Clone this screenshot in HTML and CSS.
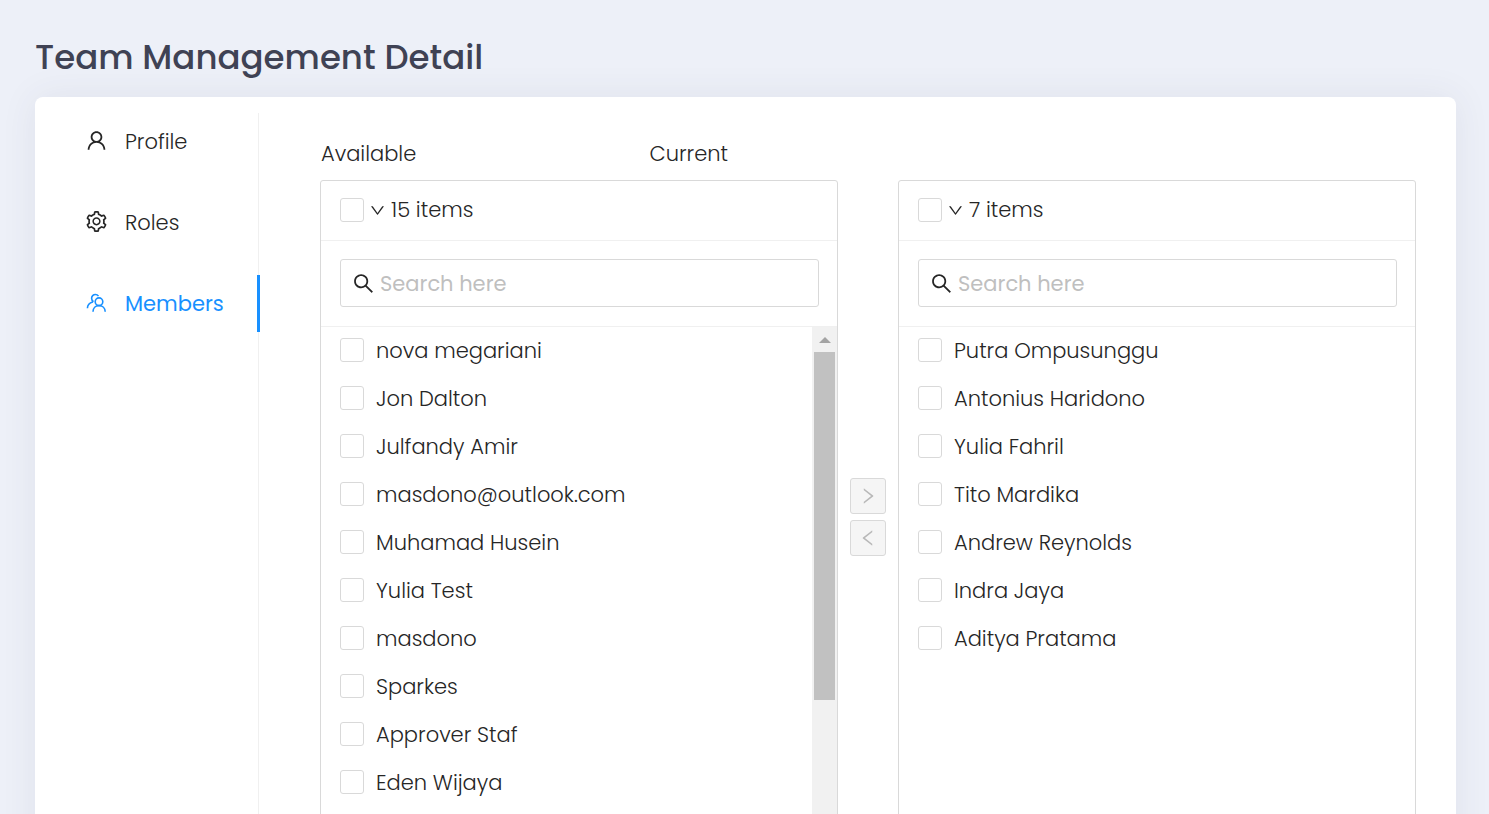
FILE: index.html
```
<!DOCTYPE html>
<html lang="en">
<head>
<meta charset="utf-8">
<meta name="viewport" content="width=device-width, initial-scale=1">
<title>Team Management Detail</title>
<link rel="stylesheet" href="styles.css">
</head>
<body>
<svg class="sprite" aria-hidden="true">
  <symbol id="user" viewBox="64 64 896 896"><path d="M858.5 763.6a374 374 0 00-80.6-119.5 375.63 375.63 0 00-119.5-80.6c-.4-.2-.8-.3-1.2-.5C719.5 518 760 444.7 760 362c0-137-111-248-248-248S264 225 264 362c0 82.7 40.5 156 102.8 201.1-.4.2-.8.3-1.2.5-44.8 18.9-85 46-119.5 80.6a375.63 375.63 0 00-80.6 119.5A371.7 371.7 0 00136 901.8a8 8 0 008 8.2h60c4.4 0 7.9-3.5 8-7.8 2-77.2 33-149.5 87.8-204.3 56.7-56.7 132-87.9 212.2-87.9s155.5 31.2 212.2 87.9C779 752.7 810 825 812 902.2c.1 4.4 3.6 7.8 8 7.8h60a8 8 0 008-8.2c-1-47.8-10.9-94.3-29.5-138.2zM512 534c-45.9 0-89.1-17.9-121.6-50.4S340 407.9 340 362c0-45.9 17.9-89.1 50.4-121.6S466.1 190 512 190s89.1 17.9 121.6 50.4S684 316.1 684 362c0 45.9-17.9 89.1-50.4 121.6S557.9 534 512 534z"/></symbol>
  <symbol id="setting" viewBox="64 64 896 896"><path d="M924.8 625.7l-65.5-56c3.1-19 4.7-38.4 4.7-57.8s-1.6-38.8-4.7-57.8l65.5-56a32.03 32.03 0 009.3-35.2l-.9-2.6a443.74 443.74 0 00-79.7-137.9l-1.8-2.1a32.12 32.12 0 00-35.1-9.5l-81.3 28.9c-30-24.6-63.5-44-99.7-57.6l-15.7-85a32.05 32.05 0 00-25.8-25.7l-2.7-.5c-52.1-9.4-106.9-9.4-159 0l-2.7.5a32.05 32.05 0 00-25.8 25.7l-15.8 85.4a351.86 351.86 0 00-99 57.4l-81.9-29.1a32 32 0 00-35.1 9.5l-1.8 2.1a446.02 446.02 0 00-79.7 137.9l-.9 2.6c-4.5 12.5-.8 26.5 9.3 35.2l66.3 56.6c-3.1 18.8-4.6 38-4.6 57.1 0 19.2 1.5 38.4 4.6 57.1L99 625.5a32.03 32.03 0 00-9.3 35.2l.9 2.6c18.1 50.4 44.9 96.9 79.7 137.9l1.8 2.1a32.12 32.12 0 0035.1 9.5l81.9-29.1c29.8 24.5 63.1 43.9 99 57.4l15.8 85.4a32.05 32.05 0 0025.8 25.7l2.7.5a449.4 449.4 0 00159 0l2.7-.5a32.05 32.05 0 0025.8-25.7l15.7-85a350 350 0 0099.7-57.6l81.3 28.9a32 32 0 0035.1-9.5l1.8-2.1c34.8-41.1 61.6-87.5 79.7-137.9l.9-2.6c4.5-12.3.8-26.3-9.3-35zM788.3 465.9c2.5 15.1 3.8 30.6 3.8 46.1s-1.3 31-3.8 46.1l-6.6 40.1 74.7 63.9a370.03 370.03 0 01-42.6 73.6L721 702.8l-31.4 25.8c-23.9 19.6-50.5 35-79.3 45.8l-38.1 14.3-17.9 97a377.5 377.5 0 01-85 0l-17.9-97.2-37.8-14.5c-28.5-10.8-55-26.2-78.7-45.7l-31.4-25.9-93.4 33.2c-17-22.9-31.2-47.6-42.6-73.6l75.5-64.5-6.5-40c-2.4-14.9-3.7-30.3-3.7-45.5 0-15.3 1.2-30.6 3.7-45.5l6.5-40-75.5-64.5c11.3-26.1 25.6-50.7 42.6-73.6l93.4 33.2 31.4-25.9c23.7-19.5 50.2-34.9 78.7-45.7l37.9-14.3 17.9-97.2c28.1-3.2 56.8-3.2 85 0l17.9 97 38.1 14.3c28.7 10.8 55.4 26.2 79.3 45.8l31.4 25.8 92.8-32.9c17 22.9 31.2 47.6 42.6 73.6L781.8 426l6.5 39.9zM512 326c-97.2 0-176 78.8-176 176s78.8 176 176 176 176-78.8 176-176-78.8-176-176-176zm79.2 255.2A111.6 111.6 0 01512 614c-29.9 0-58-11.7-79.2-32.8A111.6 111.6 0 01400 502c0-29.9 11.7-58 32.8-79.2C454 401.6 482.1 390 512 390c29.9 0 58 11.6 79.2 32.8A111.6 111.6 0 01624 502c0 29.9-11.7 58-32.8 79.2z"/></symbol>
  <symbol id="team" viewBox="0 -1 21 21"><g fill="none" stroke="currentColor" stroke-width="1.6"><circle cx="13" cy="8.7" r="3.8"/><path d="M7 18.8C7 15 9.6 12.6 13 12.6S19.2 15 19.2 18.8M12.5 3.1C11.7 2 10.6 1.5 9.4 1.5 7.2 1.5 5.6 3.2 5.6 5.3 5.6 6.8 6.3 8 7.5 8.7M6.8 9.1C3.3 10 1.5 12 1.4 15.2"/></g></symbol>
  <symbol id="search" viewBox="64 64 896 896"><path d="M909.6 854.5L649.9 594.8C690.2 542.7 712 479 712 412c0-80.2-31.3-155.4-87.9-212.1-56.6-56.7-132-87.9-212.1-87.9s-155.5 31.3-212.1 87.9C143.2 256.5 112 331.8 112 412c0 80.1 31.3 155.5 87.9 212.1C256.5 680.8 331.8 712 412 712c67 0 130.6-21.8 182.7-62l259.7 259.6a8.2 8.2 0 0011.6 0l43.6-43.5a8.2 8.2 0 000-11.6zM570.4 570.4C528 612.7 471.8 636 412 636s-116-23.3-158.4-65.6C211.3 528 188 471.8 188 412s23.3-116.1 65.6-158.4C296 211.3 352.2 188 412 188s116.1 23.2 158.4 65.6S636 352.2 636 412s-23.3 116.1-65.6 158.4z"/></symbol>
  <symbol id="down" viewBox="64 64 896 896"><path d="M884 256h-75c-5.1 0-9.9 2.5-12.9 6.6L512 654.2 227.9 262.6c-3-4.1-7.8-6.6-12.9-6.6h-75c-6.5 0-10.3 7.4-6.5 12.7l352.6 486.1c12.8 17.6 39 17.6 51.7 0l352.6-486.1c3.9-5.3.1-12.7-6.4-12.7z"/></symbol>
  <symbol id="right" viewBox="64 64 896 896"><path d="M765.7 486.8L314.9 134.7A7.97 7.97 0 00302 141v77.3c0 4.9 2.3 9.6 6.1 12.6l360 281.1-360 281.1c-3.9 3-6.1 7.7-6.1 12.6V883c0 6.7 7.7 10.4 12.9 6.3l450.8-352.1a31.96 31.96 0 000-50.4z"/></symbol>
  <symbol id="left" viewBox="64 64 896 896"><path d="M724 218.3V141c0-6.7-7.7-10.4-12.9-6.3L260.3 486.8a31.86 31.86 0 000 50.3l450.8 352.1c5.3 4.1 12.9.4 12.9-6.3v-77.3c0-4.9-2.3-9.6-6.1-12.6l-360-281 360-281.1c3.8-3 6.1-7.7 6.1-12.6z"/></symbol>
</svg>

<main class="page">
  <h1 class="title">Team Management Detail</h1>
  <div class="card">
    <nav class="tabs" aria-label="Team sections">
      <a class="tab" href="#profile"><svg class="icon"><use href="#user"/></svg>Profile</a>
      <a class="tab" href="#roles"><svg class="icon"><use href="#setting"/></svg>Roles</a>
      <a class="tab tab-active" href="#members" aria-current="page"><svg class="icon"><use href="#team"/></svg>Members</a>
    </nav>
    <section class="content">
      <div class="labels"><span>Available</span><span>Current</span></div>
      <div class="transfer">
        <section class="panel" aria-label="Available">
          <header class="panel-head">
            <input class="check" type="checkbox" aria-label="Select all available">
            <button class="menu" type="button" aria-label="Selection options"><svg class="icon-down"><use href="#down"/></svg></button>
            <span>15 items</span>
          </header>
          <div class="search-wrap">
            <label class="search"><svg class="icon"><use href="#search"/></svg><input class="search-input" type="text" placeholder="Search here" aria-label="Search available"></label>
          </div>
          <div class="panel-body">
            <ul class="list">
              <li><label class="row"><input class="check" type="checkbox">nova megariani</label></li>
              <li><label class="row"><input class="check" type="checkbox">Jon Dalton</label></li>
              <li><label class="row"><input class="check" type="checkbox">Julfandy Amir</label></li>
              <li><label class="row"><input class="check" type="checkbox">masdono@outlook.com</label></li>
              <li><label class="row"><input class="check" type="checkbox">Muhamad Husein</label></li>
              <li><label class="row"><input class="check" type="checkbox">Yulia Test</label></li>
              <li><label class="row"><input class="check" type="checkbox">masdono</label></li>
              <li><label class="row"><input class="check" type="checkbox">Sparkes</label></li>
              <li><label class="row"><input class="check" type="checkbox">Approver Staf</label></li>
              <li><label class="row"><input class="check" type="checkbox">Eden Wijaya</label></li>
            </ul>
            <div class="scrollbar" aria-hidden="true">
              <svg class="scroll-arrow" viewBox="0 0 12 6"><path d="M0 6 6 0l6 6z"/></svg>
              <div class="thumb"></div>
            </div>
          </div>
        </section>
        <div class="moves">
          <button class="move" type="button" disabled aria-label="Move to current"><svg class="icon-move"><use href="#right"/></svg></button>
          <button class="move" type="button" disabled aria-label="Move to available"><svg class="icon-move"><use href="#left"/></svg></button>
        </div>
        <section class="panel" aria-label="Current">
          <header class="panel-head">
            <input class="check" type="checkbox" aria-label="Select all current">
            <button class="menu" type="button" aria-label="Selection options"><svg class="icon-down"><use href="#down"/></svg></button>
            <span>7 items</span>
          </header>
          <div class="search-wrap">
            <label class="search"><svg class="icon"><use href="#search"/></svg><input class="search-input" type="text" placeholder="Search here" aria-label="Search current"></label>
          </div>
          <div class="panel-body">
            <ul class="list">
              <li><label class="row"><input class="check" type="checkbox">Putra Ompusunggu</label></li>
              <li><label class="row"><input class="check" type="checkbox">Antonius Haridono</label></li>
              <li><label class="row"><input class="check" type="checkbox">Yulia Fahril</label></li>
              <li><label class="row"><input class="check" type="checkbox">Tito Mardika</label></li>
              <li><label class="row"><input class="check" type="checkbox">Andrew Reynolds</label></li>
              <li><label class="row"><input class="check" type="checkbox">Indra Jaya</label></li>
              <li><label class="row"><input class="check" type="checkbox">Aditya Pratama</label></li>
            </ul>
          </div>
        </section>
      </div>
    </section>
  </div>
</main>
</body>
</html>
```
FILE: styles.css
```
* { box-sizing: border-box; }

body {
  margin: 0;
  background: #edf0f8;
  color: #262626;
  font-family: Poppins, Inter, "Open Sans", sans-serif;
  font-size: 21px;
  font-weight: 300;
  line-height: 32px;
}

.sprite { display: none; }

.page {
  height: 100vh;
  overflow: hidden;
  padding: 33px 33px 0 35px;
}

.title {
  margin: 0 0 16px;
  color: #3f4254;
  font-size: 34px;
  font-weight: 500;
  line-height: 48px;
}

.card {
  display: flex;
  padding: 16px 40px 24px 0;
  background: #fff;
  border-radius: 8px;
  box-shadow: 0 0 36px rgba(60, 66, 84, 0.08);
}

.tabs {
  display: flex;
  flex-direction: column;
  gap: 24px;
  flex: 0 0 225px;
  padding-bottom: 24px;
  background: linear-gradient(#f0f0f0, #f0f0f0) 223px 0 / 1px 100% no-repeat;
}

.tab {
  display: flex;
  align-items: center;
  gap: 18px;
  height: 57px;
  padding-left: 51px;
  border-right: 3px solid transparent;
  color: inherit;
  text-decoration: none;
}

.tab .icon { margin-bottom: 2px; }

.tab-active {
  border-right-color: #1890ff;
  color: #1890ff;
  font-weight: 400;
}

.icon {
  flex: none;
  width: 21px;
  height: 21px;
  fill: currentColor;
}

.content {
  flex: 1;
  min-width: 0;
  padding: 25px 0 0 60px;
}

.labels {
  display: grid;
  grid-template-columns: 30% 1fr;
  margin-bottom: 10px;
  padding-left: 1px;
}

.transfer { display: flex; }

.panel {
  flex: 1;
  min-width: 0;
  border: 1px solid #d9d9d9;
  border-radius: 3px;
}

.panel-head {
  display: flex;
  align-items: center;
  height: 60px;
  padding: 0 18px 2px 19px;
  border-bottom: 1px solid #f0f0f0;
}

.menu {
  display: flex;
  padding: 2px 6px 0;
  border: 0;
  background: none;
  color: inherit;
}

.icon-down {
  width: 15px;
  height: 15px;
  fill: currentColor;
}

.check {
  appearance: none;
  flex: none;
  width: 24px;
  height: 24px;
  margin: 0;
  border: 1px solid #d9d9d9;
  border-radius: 3px;
  background: #fff;
}

.check:checked {
  border-color: #1890ff;
  background: #1890ff;
}

.search-wrap {
  padding: 18px 18px 19px 19px;
  border-bottom: 1px solid #f0f0f0;
}

.search {
  display: flex;
  align-items: center;
  gap: 6px;
  height: 48px;
  padding: 0 12px;
  border: 1px solid #d9d9d9;
  border-radius: 3px;
}

.search-input {
  flex: 1;
  min-width: 0;
  padding: 2px 0 0;
  border: 0;
  outline: 0;
  background: none;
  color: inherit;
  font: inherit;
  font-weight: 400;
}

.search-input::placeholder { color: #bfbfbf; }

.panel-body {
  display: flex;
  height: 526px;
}

.list {
  flex: 1;
  min-width: 0;
  margin: 0;
  padding: 0;
  overflow: hidden;
  list-style: none;
}

.row {
  display: flex;
  align-items: center;
  gap: 12px;
  height: 48px;
  padding: 0 19px;
}

.row .check { margin-bottom: 2px; }

.scrollbar {
  display: flex;
  flex-direction: column;
  align-items: center;
  gap: 9px;
  width: 25px;
  padding-top: 10px;
  background: #f1f1f1;
}

.scroll-arrow {
  flex: none;
  width: 12px;
  height: 6px;
  fill: #a3a3a3;
}

.thumb {
  width: 21px;
  height: 348px;
  background: #c1c1c1;
}

.moves {
  display: flex;
  flex-direction: column;
  align-self: center;
  gap: 6px;
  margin: 0 12px;
}

.move {
  display: flex;
  align-items: center;
  justify-content: center;
  width: 36px;
  height: 36px;
  padding: 0;
  border: 1px solid #d9d9d9;
  border-radius: 3px;
  background: #f5f5f5;
  color: #b8b8b8;
}

.icon-move {
  width: 18px;
  height: 18px;
  fill: currentColor;
}
```
